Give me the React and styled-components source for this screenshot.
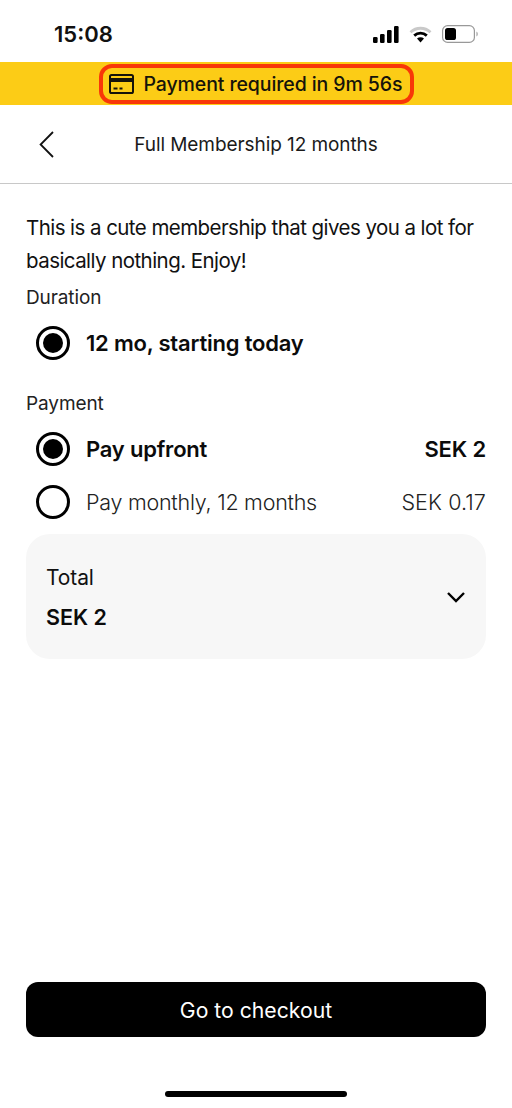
import React from "react";
import styled, { createGlobalStyle } from "styled-components";

const GlobalStyle = createGlobalStyle`
  html, body {
    margin: 0;
    padding: 0;
    background: #fff;
  }
  body {
    font-family: Inter, "Liberation Sans", sans-serif;
    color: #0b0b0b;
  }
`;

const Page = styled.div`
  width: 512px;
  height: 1108px;
  display: flex;
  flex-direction: column;
  overflow: hidden;
  background: #fff;
`;

const StatusBar = styled.div`
  height: 62px;
  flex: none;
  display: flex;
  align-items: center;
  justify-content: space-between;
  padding: 6px 34px 0 54px;
  box-sizing: border-box;
`;

const Clock = styled.span`
  font-size: 22px;
  font-weight: 600;
  color: #111;
`;

const StatusIcons = styled.div`
  display: flex;
  align-items: center;
  gap: 10px;
`;

const Banner = styled.div`
  height: 43px;
  flex: none;
  background: #fccc16;
  display: flex;
  align-items: center;
  justify-content: center;
`;

const BannerBox = styled.div`
  display: flex;
  align-items: center;
  gap: 10px;
  height: 40px;
  width: 315px;
  box-sizing: border-box;
  padding-left: 6px;
  border: 4px solid #f83708;
  border-radius: 13px;
  font-size: 19.5px;
  font-weight: 500;
  letter-spacing: -0.1px;
  color: #15130a;
  white-space: nowrap;

  svg {
    flex: none;
  }
`;

const NavBar = styled.div`
  height: 79px;
  flex: none;
  box-sizing: border-box;
  border-bottom: 1px solid #c8c8c8;
  display: grid;
  grid-template-columns: 1fr auto 1fr;
  align-items: center;
  padding: 0 39px;
`;

const NavTitle = styled.span`
  font-size: 19px;
  letter-spacing: -0.08px;
  color: #1a1a1a;
`;

const Content = styled.main`
  flex: 1;
  padding: 27px 26px 0;
  display: flex;
  flex-direction: column;
`;

const Description = styled.p`
  margin: 0;
  font-size: 20.5px;
  line-height: 33px;
  letter-spacing: -0.56px;
  color: #111;
`;

const GroupLabel = styled.div`
  font-size: 19px;
  line-height: 26px;
  letter-spacing: -0.1px;
  color: #222;
  margin-top: ${(p) => p.$top}px;
`;

const OptionRow = styled.div`
  display: flex;
  align-items: center;
  justify-content: space-between;
  margin-top: ${(p) => p.$top}px;
  height: 36px;
  padding-left: 10px;
`;

const OptionLeft = styled.div`
  display: flex;
  align-items: center;
  gap: 16px;
`;

const Radio = styled.span`
  width: 34px;
  height: 34px;
  box-sizing: border-box;
  border: 3px solid #000;
  border-radius: 50%;
  display: flex;
  align-items: center;
  justify-content: center;

  &::after {
    content: "";
    display: ${(p) => (p.$checked ? "block" : "none")};
    width: 20px;
    height: 20px;
    border-radius: 50%;
    background: #000;
  }
`;

const OptionText = styled.span`
  font-size: ${(p) => (p.$bold ? "22px" : "21.5px")};
  font-weight: ${(p) => (p.$bold ? 600 : 300)};
  letter-spacing: ${(p) => (p.$bold ? "-0.2px" : "-0.25px")};
  color: ${(p) => (p.$bold ? "#0b0b0b" : "#222")};
`;

const Price = styled(OptionText)`
  letter-spacing: ${(p) => (p.$bold ? "-0.15px" : "0.1px")};
`;

const TotalCard = styled.section`
  margin-top: 14px;
  height: 125px;
  box-sizing: border-box;
  background: #f7f7f7;
  border-radius: 24px;
  padding: 1px 20px 0;
  display: flex;
  align-items: center;
  justify-content: space-between;
`;

const TotalColumn = styled.div`
  display: flex;
  flex-direction: column;
  gap: 13px;
`;

const TotalLabel = styled.span`
  font-size: 21px;
  line-height: 26px;
  letter-spacing: -0.1px;
  color: #111;
`;

const TotalValue = styled.span`
  font-size: 21.5px;
  line-height: 26px;
  font-weight: 600;
`;

const Footer = styled.footer`
  flex: none;
  padding: 0 26px;
`;

const CheckoutButton = styled.button`
  width: 100%;
  height: 55px;
  border: 0;
  border-radius: 12px;
  background: #000;
  color: #fff;
  font-family: inherit;
  font-size: 21.2px;
  font-weight: 400;
`;

const HomeBar = styled.div`
  width: 182px;
  height: 6px;
  border-radius: 3px;
  background: #000;
  margin: 54px auto 11px;
`;

const SignalIcon = () => (
  <svg width="26" height="17" viewBox="0 0 26 17" fill="#000">
    <rect x="0" y="11" width="4.6" height="6" rx="1.2" />
    <rect x="7" y="8" width="4.6" height="9" rx="1.2" />
    <rect x="14" y="4" width="4.6" height="13" rx="1.2" />
    <rect x="21" y="0" width="4.6" height="17" rx="1.2" />
  </svg>
);

const WifiIcon = () => (
  <svg width="23" height="17" viewBox="0 0 23 17" fill="none">
    <path d="M1.5 6.2C7.2 .9 15.8 .9 21.5 6.2" stroke="#c9c9c9" strokeWidth="2.8" />
    <path d="M5.2 9.6C8.9 6.2 14.1 6.2 17.8 9.6" stroke="#000" strokeWidth="2.8" />
    <path d="M8 12.6C10 10.9 13 10.9 15 12.6L11.5 16.4Z" fill="#000" />
  </svg>
);

const BatteryIcon = () => (
  <svg width="36" height="18" viewBox="0 0 36 18" fill="none">
    <rect x=".6" y=".6" width="31.8" height="16.8" rx="5" stroke="#999" strokeWidth="1.2" />
    <rect x="3" y="3" width="11" height="12" rx="2.6" fill="#000" />
    <path d="M34.4 6.6c1 .4 1.4 1.4 1.4 2.4s-.4 2-1.4 2.4z" fill="#aaa" />
  </svg>
);

const CardIcon = () => (
  <svg width="25" height="20" viewBox="0 0 25 20" fill="none">
    <rect x="1" y="1" width="23" height="18" rx="1.6" stroke="#15130a" strokeWidth="2" />
    <rect x="1" y="4" width="23" height="4" fill="#15130a" />
    <path d="M4.5 14.5h4M10.5 14.5h3" stroke="#15130a" strokeWidth="1.8" />
  </svg>
);

const BackIcon = () => (
  <svg width="15" height="27" viewBox="0 0 15 27" fill="none">
    <path d="M14 1 1.6 13.5 14 26" stroke="#111" strokeWidth="1.8" />
  </svg>
);

const ChevronIcon = () => (
  <svg width="20" height="12" viewBox="0 0 20 12" fill="none">
    <path d="M2 2l8 8 8-8" stroke="#000" strokeWidth="2.4" />
  </svg>
);

const App = () => (
  <Page>
    <GlobalStyle />
    <StatusBar>
      <Clock>15:08</Clock>
      <StatusIcons>
        <SignalIcon />
        <WifiIcon />
        <BatteryIcon />
      </StatusIcons>
    </StatusBar>
    <Banner>
      <BannerBox>
        <CardIcon />
        Payment required in 9m 56s
      </BannerBox>
    </Banner>
    <NavBar>
      <BackIcon />
      <NavTitle>Full Membership 12 months</NavTitle>
    </NavBar>
    <Content>
      <Description>
        This is a cute membership that gives you a lot for basically nothing.
        Enjoy!
      </Description>
      <GroupLabel $top={8}>Duration</GroupLabel>
      <OptionRow $top={14}>
        <OptionLeft>
          <Radio $checked />
          <OptionText $bold>12 mo, starting today</OptionText>
        </OptionLeft>
      </OptionRow>
      <GroupLabel $top={30}>Payment</GroupLabel>
      <OptionRow $top={14}>
        <OptionLeft>
          <Radio $checked />
          <OptionText $bold>Pay upfront</OptionText>
        </OptionLeft>
        <Price $bold>SEK 2</Price>
      </OptionRow>
      <OptionRow $top={17}>
        <OptionLeft>
          <Radio />
          <OptionText>Pay monthly, 12 months</OptionText>
        </OptionLeft>
        <Price>SEK 0.17</Price>
      </OptionRow>
      <TotalCard>
        <TotalColumn>
          <TotalLabel>Total</TotalLabel>
          <TotalValue>SEK 2</TotalValue>
        </TotalColumn>
        <ChevronIcon />
      </TotalCard>
    </Content>
    <Footer>
      <CheckoutButton>Go to checkout</CheckoutButton>
      <HomeBar />
    </Footer>
  </Page>
);

export default App;
